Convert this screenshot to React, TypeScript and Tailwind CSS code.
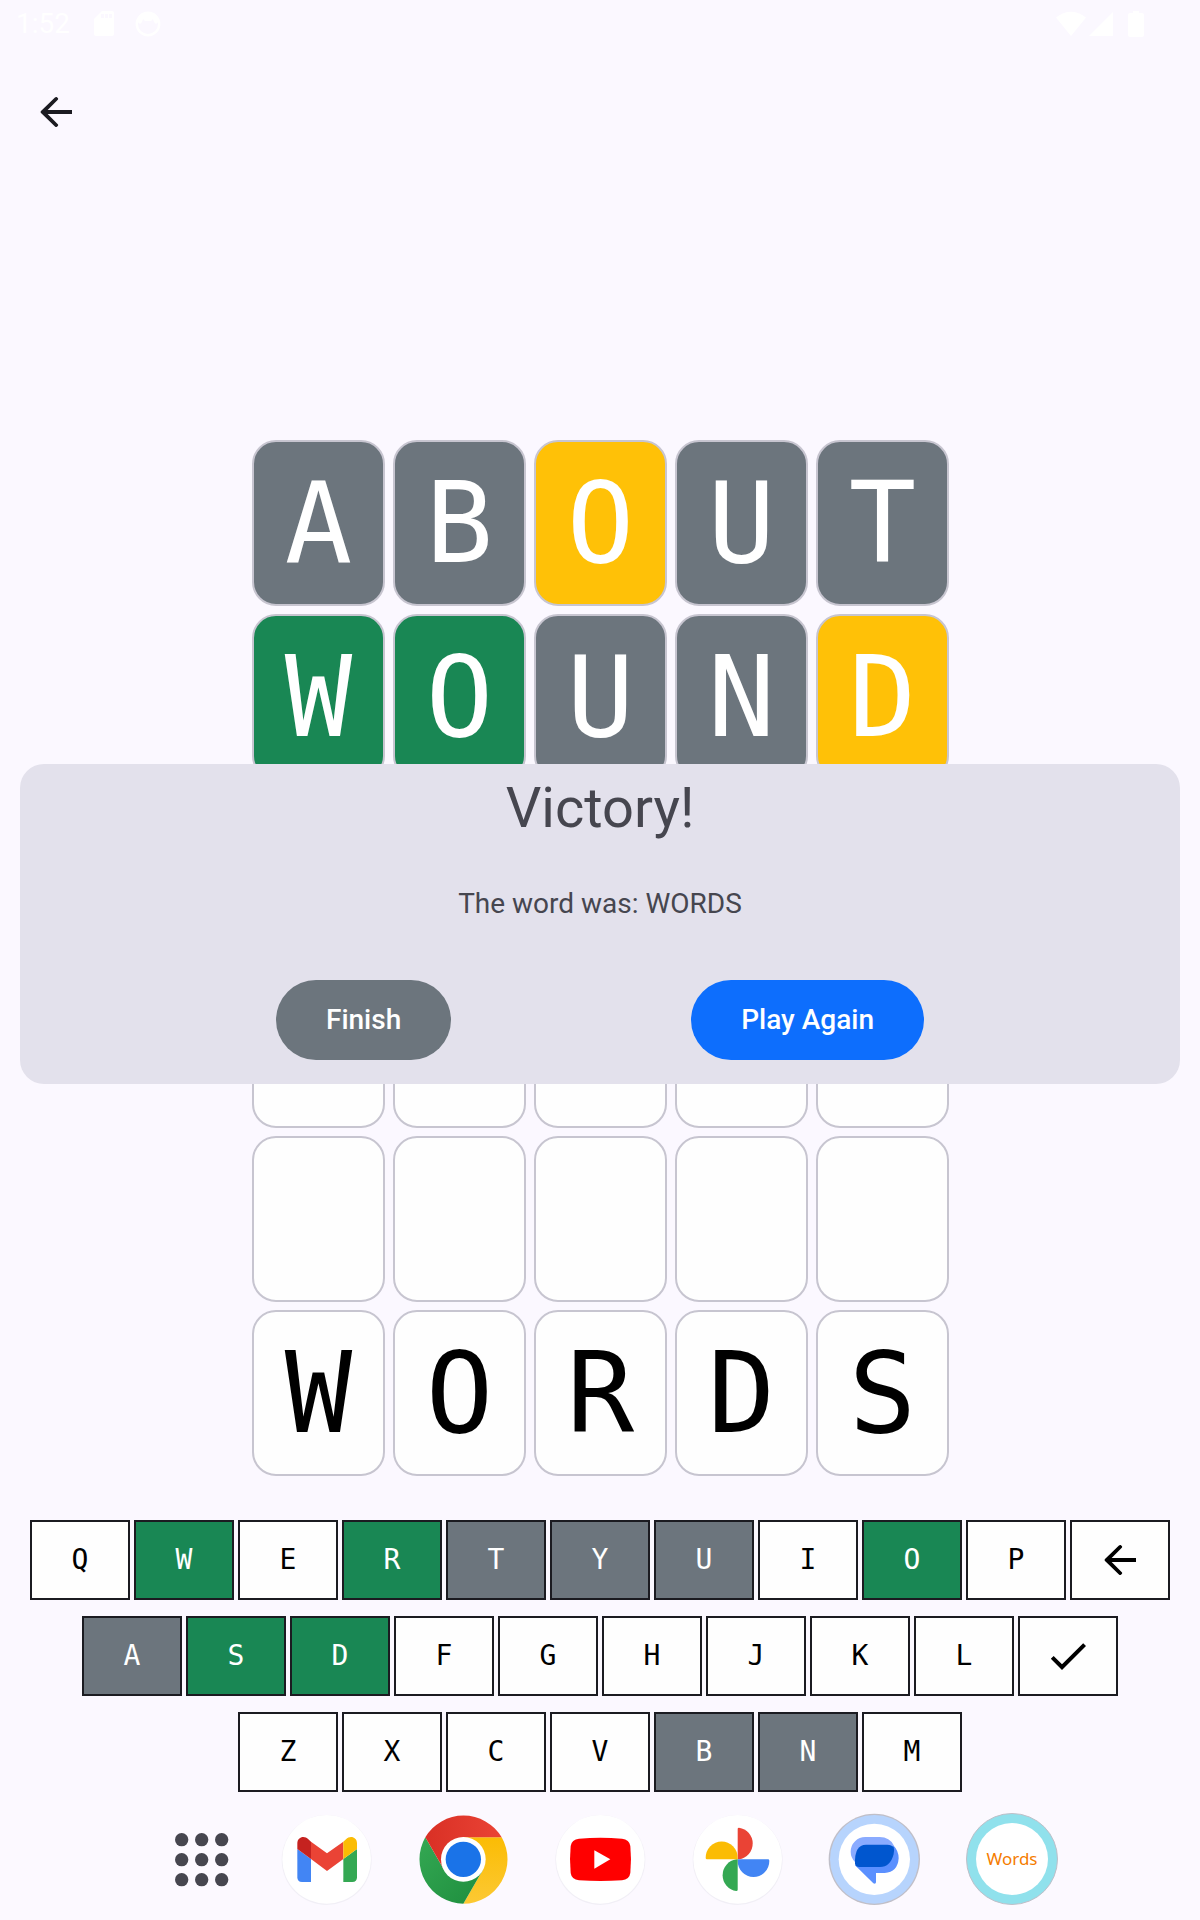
import type { ReactNode } from "react";

type Mark = "hit" | "near" | "miss" | "blank";
type Cell = { letter: string; mark: Mark };

const tone: Record<Mark, string> = {
  hit: "bg-[#198754] text-white",
  near: "bg-[#ffc107] text-white",
  miss: "bg-[#6c757d] text-white",
  blank: "bg-[#fefefe] text-black",
};

const row = (word: string, marks: Mark[]): Cell[] =>
  marks.map((mark, i) => ({ letter: word[i] ?? "", mark }));

const blanks: Mark[] = ["blank", "blank", "blank", "blank", "blank"];

const board: Cell[][] = [
  row("ABOUT", ["miss", "miss", "near", "miss", "miss"]),
  row("WOUND", ["hit", "hit", "miss", "miss", "near"]),
  row("", blanks),
  row("", blanks),
  row("", blanks),
  row("WORDS", blanks),
];

const keyRows: string[][] = [
  [..."QWERTYUIOP", "back"],
  [..."ASDFGHJKL", "enter"],
  [..."ZXCVBNM"],
];

const keyMark = (key: string): Mark =>
  key.length > 1 ? "blank" : "WRSDO".includes(key) ? "hit" : "TYUABN".includes(key) ? "miss" : "blank";

function ArrowBack() {
  return (
    <svg className="size-12" viewBox="0 0 24 24" fill="currentColor" aria-hidden="true">
      <path d="M20 11H7.83l4.95-4.94c.4-.4.4-.7.1-1l-.4-.4c-.3-.3-.6-.3-1 .1L4.500 11.500a.7.7 0 0 0 0 1l6.980 6.740c.4.4.7.4 1 .1l.4-.4c.3-.3.3-.6-.1-1L7.830 13H20z" />
    </svg>
  );
}

function Check() {
  return (
    <svg className="size-12" viewBox="0 0 24 24" fill="currentColor" aria-hidden="true">
      <path d="M9 16.17 4.83 12l-1.42 1.41L9 19 21 7l-1.41-1.41z" />
    </svg>
  );
}

function StatusBar() {
  return (
    <div className="flex h-12 items-center justify-between pl-4 pr-14 text-white">
      <div className="flex items-center">
        <span className="text-[28px] leading-8">1:52</span>
        <svg className="ml-6 h-[26px] w-5" viewBox="0 0 20 26" fill="currentColor" aria-hidden="true">
          <path
            fillRule="evenodd"
            d="M8 0h10a2 2 0 0 1 2 2v21a2 2 0 0 1-2 2H2a2 2 0 0 1-2-2V8zM7 3v4h3V3zm4 0v4h3V3zm4 0v4h3V3z"
          />
        </svg>
        <svg className="ml-[21px] size-[26px]" viewBox="0 0 26 26" aria-hidden="true">
          <circle cx="13" cy="13" r="11.2" fill="none" stroke="currentColor" strokeWidth="2.4" />
          <path d="M2 10 5 5l8-3 8 3 3 5-3 3-2-2-1-3-2 2h-6L8 8l-1 3-2 2z" fill="currentColor" />
        </svg>
      </div>
      <svg className="h-[26px] w-[88px]" viewBox="0 0 88 26" fill="currentColor" aria-hidden="true">
        <path d="M0 6.5Q15-5 30 6.5L15 25z" />
        <path d="M57 1v24H33z" />
        <path d="M77 0h6v2h3a2 2 0 0 1 2 2v20a2 2 0 0 1-2 2H74a2 2 0 0 1-2-2V4a2 2 0 0 1 2-2h3z" />
      </svg>
    </div>
  );
}

function Board() {
  return (
    <div className="flex flex-col gap-2 pl-px">
      {board.map((cells, r) => (
        <div key={r} className="flex justify-center gap-2">
          {cells.map((cell, c) => (
            <div
              key={c}
              className={`flex h-[166px] w-[133px] items-center justify-center rounded-3xl border-2 border-[#c7c5d0] font-['DejaVu_Sans_Mono',monospace] text-[112px] leading-none ${tone[cell.mark]}`}
            >
              {cell.letter}
            </div>
          ))}
        </div>
      ))}
    </div>
  );
}

function Keyboard() {
  return (
    <div className="flex flex-col gap-4 px-[30px]">
      {keyRows.map((keys, r) => (
        <div key={r} className="flex justify-center gap-1">
          {keys.map((key) => (
            <button
              key={key}
              type="button"
              aria-label={key}
              className={`flex h-20 max-w-[100px] flex-1 items-center justify-center border-2 border-[#1b1b21] font-['DejaVu_Sans_Mono',monospace] text-[28px] leading-8 ${tone[keyMark(key)]}`}
            >
              {key === "back" ? <ArrowBack /> : key === "enter" ? <Check /> : key}
            </button>
          ))}
        </div>
      ))}
    </div>
  );
}

function VictoryDialog() {
  return (
    <div className="absolute inset-0 flex items-center px-5">
      <div
        role="dialog"
        aria-labelledby="dialog-title"
        className="flex w-full flex-col items-center rounded-3xl bg-[#e3e1ec] px-4 pb-6 pt-3 text-[#46464f]"
      >
        <h1 id="dialog-title" className="text-[56px] leading-[64px]">
          Victory!
        </h1>
        <p className="mt-10 text-[28px] leading-12">The word was: WORDS</p>
        <div className="mt-[52px] flex w-full justify-evenly text-[28px] font-medium leading-10 text-white">
          <button type="button" className="h-20 rounded-full bg-[#6c757d] px-[50px]">
            Finish
          </button>
          <button type="button" className="h-20 rounded-full bg-[#0d6efd] px-[50px]">
            Play Again
          </button>
        </div>
      </div>
    </div>
  );
}

function AppIcon({ label, viewBox, children }: { label: string; viewBox: string; children: ReactNode }) {
  return (
    <button type="button" aria-label={label} className="shrink-0">
      <svg className="size-24" viewBox={viewBox} aria-hidden="true">
        {children}
      </svg>
    </button>
  );
}

function Disc({ cx }: { cx: number }) {
  return (
    <>
      <circle cx={cx} cy="180" r="135" fill="#f1eff6" />
      <circle cx={cx} cy="178" r="133" fill="#fff" />
    </>
  );
}

function Taskbar() {
  return (
    <nav className="flex h-[120px] items-center justify-center gap-[41px] bg-[#fcf9ff] pl-6">
      <button type="button" aria-label="All apps" className="shrink-0">
        <svg className="h-24 w-[74px]" viewBox="42 36 222 288" fill="#46464f" aria-hidden="true">
          {[119, 179, 239].map((y) => [95, 155, 215].map((x) => <circle key={`${x}-${y}`} cx={x} cy={y} r="20" />))}
        </svg>
      </button>
      <AppIcon label="Gmail" viewBox="387 36 288 288">
        <Disc cx={530} />
        <path d="M442 147 483 177V246H456Q442 246 442 232z" fill="#4285f4" />
        <path d="M621 147 580 177V246H607Q621 246 621 232z" fill="#34a853" />
        <path d="M483 125 531 160 580 125V177L531 213 483 177z" fill="#ea4335" />
        <path d="M442 147V130C442 111 463 105 475 118L483 125V177z" fill="#c5221f" />
        <path d="M621 147V130C621 111 600 105 588 118L580 125V177z" fill="#fbbc04" />
      </AppIcon>
      <AppIcon label="Chrome" viewBox="798 36 288 288">
        <defs>
          <linearGradient id="chrome-red" x1="0" x2="1">
            <stop offset="0" stopColor="#d93025" />
            <stop offset="1" stopColor="#ea4335" />
          </linearGradient>
          <linearGradient id="chrome-green" x1="0" y1="0" x2="1" y2="1">
            <stop offset="0" stopColor="#34a853" />
            <stop offset="1" stopColor="#1e8e3e" />
          </linearGradient>
          <linearGradient id="chrome-yellow" x1="0" y1="1" x2="0" y2="0">
            <stop offset="0" stopColor="#fcc934" />
            <stop offset="1" stopColor="#fbbc04" />
          </linearGradient>
        </defs>
        <path d="M940 178V112H1055A133 133 0 0 1 940 311L998 211z" fill="url(#chrome-yellow)" />
        <path d="M940 178 883 211 826 112A133 133 0 0 0 940 311L998 211z" fill="url(#chrome-green)" />
        <path d="M940 178 883 211 826 112A133 133 0 0 1 1055 112H940z" fill="url(#chrome-red)" />
        <circle cx="940" cy="178" r="67" fill="#fff" />
        <circle cx="940" cy="178" r="53" fill="#1a73e8" />
      </AppIcon>
      <AppIcon label="YouTube" viewBox="69 36 288 288">
        <Disc cx={211} />
        <path
          d="M147 116Q211 111 276 116 298 118 301 138 305 178 301 219 298 239 276 241 211 245 147 241 125 239 122 219 118 178 122 138 125 118 147 116z"
          fill="#f00"
        />
        <path d="M193 151V206L241 178z" fill="#fff" />
      </AppIcon>
      <AppIcon label="Photos" viewBox="480 36 288 288">
        <Disc cx={623} />
        <path d="M623 178V87Q623 83 627 83A48 48 0 0 1 627 178z" fill="#ea4335" />
        <path d="M623 178H714Q718 178 718 182A47.5 49 0 0 1 623 182z" fill="#4285f4" />
        <path d="M623 178V269Q623 273 619 273A48 48 0 0 1 619 178z" fill="#34a853" />
        <path d="M623 178H531Q527 178 527 174A47.5 49 0 0 1 623 174z" fill="#fbbc04" />
      </AppIcon>
      <AppIcon label="Messages" viewBox="81 36 288 288">
        <circle cx="223" cy="178" r="137" fill="#c0bfc8" />
        <circle cx="223" cy="178" r="133" fill="#b7d4fd" />
        <circle cx="223" cy="178" r="107" fill="#fff" />
        <path d="M197 111H239Q269 111 282 137L165 186Q152 172 152 155A44 44 0 0 1 197 111z" fill="#8aabff" />
        <path d="M281 137Q296 152 296 175 293 217 254 219H228V247Q227 254 220 250L165 196z" fill="#5b90ff" />
        <path d="M198 134H262Q275 134 281 142 284 150 281 162 271 201 240 201H178Q168 201 165 192 163 134 198 134z" fill="#0056cf" />
      </AppIcon>
      <button
        type="button"
        className="flex size-24 shrink-0 items-start justify-center pt-px font-['Noto_Sans',sans-serif] text-[17px] text-[#f57c00]"
      >
        <span className="flex size-[92px] items-center justify-center rounded-full border border-[#c0bfc8] bg-[#90e1ec]">
          <span className="flex size-[72px] items-center justify-center rounded-full bg-white">Words</span>
        </span>
      </button>
    </nav>
  );
}

export default function App() {
  return (
    <div className="flex min-h-screen flex-col bg-[#fbf8ff] font-[Roboto,sans-serif]">
      <StatusBar />
      <main className="relative flex flex-1 flex-col pb-2">
        <header className="flex h-32 items-center px-8 text-[#1b1b21]">
          <button type="button" aria-label="Back">
            <ArrowBack />
          </button>
        </header>
        <div className="flex flex-1 flex-col justify-end gap-11">
          <Board />
          <Keyboard />
        </div>
        <VictoryDialog />
      </main>
      <Taskbar />
    </div>
  );
}
